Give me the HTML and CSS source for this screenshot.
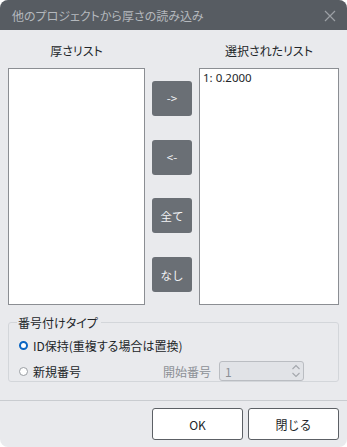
FILE: index.html
```html
<!DOCTYPE html>
<html lang="ja">
<head>
<meta charset="utf-8">
<link rel="stylesheet" href="styles.css">
</head>
<body>
<div class="dialog">
  <div class="titlebar">
    <span class="title">他のプロジェクトから厚さの読み込み</span>
    <svg class="close" width="12" height="12" viewBox="0 0 12 12"><path d="M1 1 L11 11 M11 1 L1 11" stroke="#9ca0a5" stroke-width="1.2" fill="none"/></svg>
  </div>
  <div class="content">
    <div class="heads">
      <div class="head left">厚さリスト</div>
      <div class="head right">選択されたリスト</div>
    </div>
    <div class="lists">
      <div class="listbox"></div>
      <div class="mid">
        <button class="mv">-&gt;</button>
        <button class="mv">&lt;-</button>
        <button class="mv">全て</button>
        <button class="mv">なし</button>
      </div>
      <div class="listbox"><div class="item">1: 0.2000</div></div>
    </div>
    <fieldset class="group">
      <legend>番号付けタイプ</legend>
      <div class="row"><span class="radio on"></span><span>ID保持(重複する場合は置換)</span></div>
      <div class="row row2">
        <span class="radio"></span><span class="lbl">新規番号</span>
        <span class="start">開始番号</span>
        <div class="spin"><span>1</span>
          <svg class="arrows" width="10" height="16" viewBox="0 0 10 16"><path d="M1.5 6 L5 2.5 L8.5 6 M1.5 10 L5 13.5 L8.5 10" stroke="#a3a7ac" stroke-width="1.1" fill="none"/></svg>
        </div>
      </div>
    </fieldset>
  </div>
  <div class="footer">
    <button class="btn">OK</button>
    <button class="btn">閉じる</button>
  </div>
</div>
</body>
</html>
```
FILE: styles.css
```css
html, body { margin: 0; padding: 0; background: #ffffff; }
body { font-family: "Noto Sans", "Noto Sans CJK JP", sans-serif; font-size: 12px; color: #222629; font-feature-settings: "palt"; }
.dialog { width: 347px; height: 447px; background: #e9eaed; border-radius: 8px; overflow: hidden; display: flex; flex-direction: column; }
.titlebar { height: 30px; background: #575c62; display: flex; align-items: center; justify-content: space-between; padding: 0 11px 0 12px; flex-shrink: 0; }
.title { color: #b4b8bd; font-size: 12px; font-family: "Noto Sans CJK JP", sans-serif; }
.close { margin-top: 1px; }
.content { padding: 0 8px; flex: 1; display: flex; flex-direction: column; }
.heads { display: flex; height: 38px; align-items: center; padding-top: 2px; box-sizing: border-box; font-family: "Noto Sans CJK JP", sans-serif; }
.head { text-align: center; }
.head.left { width: 137px; }
.head.right { width: 140px; margin-left: 54px; }
.lists { display: flex; height: 237px; align-items: stretch; }
.listbox { background: #ffffff; border: 1px solid #8b8e93; box-sizing: border-box; width: 137px; display: flex; flex-direction: column; justify-content: flex-start; }
.listbox + .mid + .listbox { width: 140px; }
.item { padding: 1px 3px; font-size: 11.5px; line-height: 16px; }
.mid { width: 54px; display: flex; flex-direction: column; align-items: center; justify-content: space-around; padding: 1px 0; box-sizing: border-box; }
.mv { width: 40px; height: 35px; border: none; border-radius: 3px; background: #6a6f75; color: #f2f3f5; font-family: "Noto Sans CJK JP", sans-serif; font-size: 11.5px; padding: 0; }
.group { margin: 9px 0 0 0; padding: 2px 10px 6px 10px; border: 1px solid #d3d6da; border-radius: 3px; height: 68px; box-sizing: border-box; }
.group legend { padding: 0 3px 0 1px; margin-left: -2px; font-family: "Noto Sans CJK JP", sans-serif; }
.row { display: flex; align-items: center; height: 24px; font-family: "Noto Sans CJK JP", sans-serif; }
.row2 { height: 28px; }
.radio { width: 9px; height: 9px; border-radius: 50%; border: 1px solid #9a9ea3; background: #fff; margin-right: 5px; box-sizing: border-box; flex-shrink: 0; }
.radio.on { border: 2.5px solid #0b66c3; }
.lbl { width: 130px; flex-shrink: 0; }
.start { color: #8c9096; width: 56px; flex-shrink: 0; }
.spin { width: 85px; height: 20px; box-sizing: border-box; border: 1px solid #babdc2; border-radius: 3px; background: #e1e3e7; display: flex; align-items: center; justify-content: space-between; padding: 0 2px 0 5px; color: #8c9096; flex-shrink: 0; }
.footer { border-top: 1px solid #c9ccd0; height: 47px; box-sizing: border-box; display: flex; justify-content: flex-end; align-items: flex-start; padding: 7px 8px 0 0; gap: 5px; }
.btn { width: 91px; height: 32px; background: #ffffff; border: 1px solid #5c6065; border-radius: 3px; font-family: "Noto Sans CJK JP", sans-serif; font-size: 12px; color: #222629; padding: 0; }
```
